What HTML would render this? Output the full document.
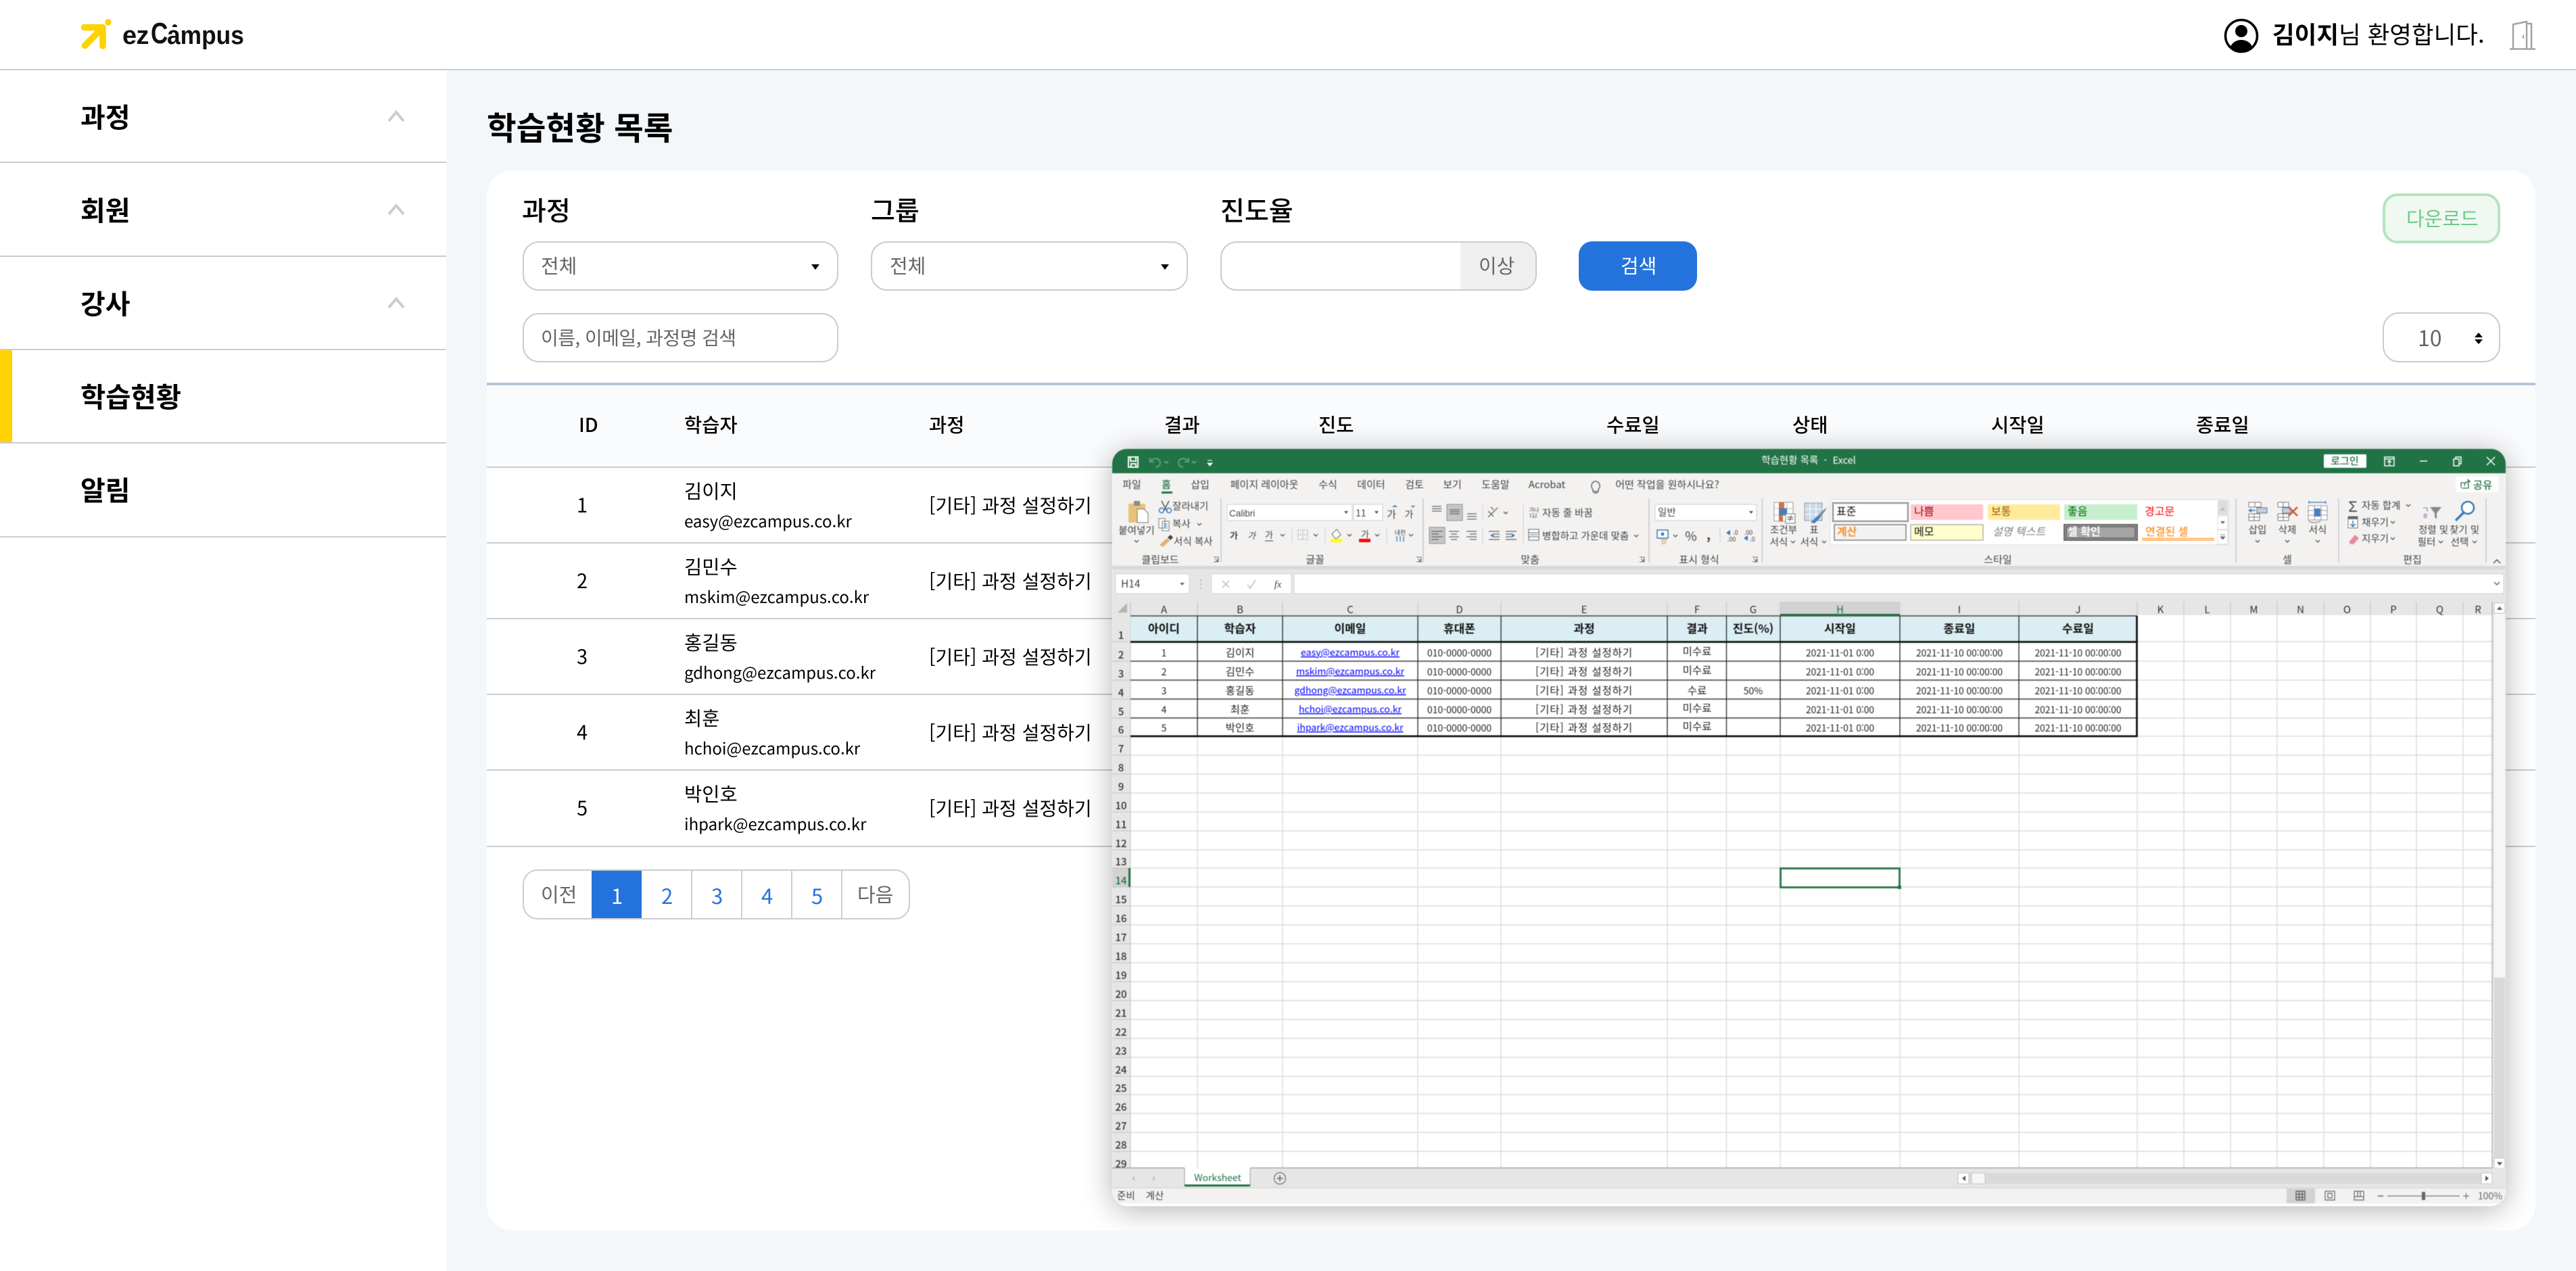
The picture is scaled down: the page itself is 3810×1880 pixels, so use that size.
<!DOCTYPE html>
<html lang="ko"><head><meta charset="utf-8"><title>학습현황 목록</title>
<style>
html,body{margin:0;padding:0;width:3810px;height:1880px;overflow:hidden;background:#f4f7fa;font-family:"Noto Sans CJK KR","Liberation Sans",sans-serif;color:#000}
.a{position:absolute;box-sizing:border-box}
.t{position:absolute;white-space:nowrap;line-height:1}
.b{font-weight:700}.m{font-weight:500}
.line{position:absolute;height:2px;background:#ccc}
.box{position:absolute;box-sizing:border-box;border:2px solid #ccc;border-radius:24px;background:#fff}
.g{color:#666}
.tri{position:absolute;width:0;height:0;border-left:6px solid transparent;border-right:6px solid transparent;border-top:8px solid #000}
.blue{color:#2473dd}
svg text{font-family:"Noto Sans CJK KR","Liberation Sans",sans-serif;font-size:15px;fill:#444}
.c{text-anchor:middle}
.hd{font-size:17px;font-weight:700;fill:#111;text-anchor:middle}
.d{font-size:15.5px;fill:#222;text-anchor:middle}
.e{font-size:15.5px;fill:#222;text-anchor:middle;letter-spacing:.9px}
.n{font-size:14px;fill:#222;text-anchor:middle}
.l{font-size:14px;fill:#00f;text-anchor:middle;text-decoration:underline}
.r{font-size:15px;font-weight:500;fill:#333;text-anchor:middle}
.col{font-size:15px;fill:#333;text-anchor:middle}
.s{font-size:15px;fill:#333}
.lg{position:absolute;white-space:nowrap;font:700 38px/44px "Liberation Sans",sans-serif;color:#111;transform-origin:0 0}
</style></head><body>
<!-- header -->
<div class="a" style="left:0;top:0;width:3810px;height:104px;background:#fff;border-bottom:2px solid #ccc"></div>
<svg class="a" style="left:115px;top:24px" width="60" height="54" viewBox="115 24 60 54">
<path d="M124.500 40.500H152V68M150 42.500L125.500 67.500" fill="none" stroke="#ffd200" stroke-width="9.500" stroke-linecap="round" stroke-linejoin="round"/>
<ellipse cx="160" cy="33" rx="4.500" ry="5" fill="#ffd200"/></svg>
<div class="lg" style="left:181px;top:31px;letter-spacing:-.6px">ez</div>
<div class="lg" style="left:223px;top:25px;font-size:44px;line-height:50px;transform:scaleX(.8)">C</div>
<div class="lg" style="left:247px;top:31px;transform:scaleX(.93)">ampus</div>
<div class="a" style="left:255px;top:36px;width:7px;height:4px;background:#111;border-radius:4px 4px 0 0"></div>
<svg class="a" style="left:3285px;top:24px" width="60" height="60" viewBox="3285 24 60 60">
<defs><clipPath id="uc"><circle cx="3315" cy="53" r="24"/></clipPath></defs>
<circle cx="3315" cy="53" r="23.500" fill="#fff" stroke="#000" stroke-width="3.500"/>
<circle cx="3315" cy="46" r="9" fill="#000"/>
<ellipse cx="3315" cy="74" rx="17" ry="15" fill="#000" clip-path="url(#uc)"/></svg>
<div class="t" style="left:3361px;top:32px;font-size:35.500px"><span class="b">김이지</span>님 환영합니다.</div>
<svg class="a" style="left:3708px;top:26px" width="46" height="52" viewBox="3708 26 46 52" fill="none" stroke="#a3a3a3" stroke-width="2.500">
<path d="M3712 72.500H3750M3717 72V36L3737 32V72M3738 35H3744V72"/><path d="M3732 52V57" stroke-width="2"/></svg>

<!-- sidebar -->
<div class="a" style="left:0;top:104px;width:660px;height:1776px;background:#fff"></div>
<div class="line" style="left:0;top:239px;width:660px"></div>
<div class="line" style="left:0;top:378px;width:660px"></div>
<div class="line" style="left:0;top:516px;width:660px"></div>
<div class="line" style="left:0;top:654px;width:660px"></div>
<div class="line" style="left:0;top:793px;width:660px"></div>
<div class="a" style="left:0;top:518px;width:18px;height:136px;background:#ffd200"></div>
<div class="t b" style="left:119px;top:151px;font-size:40px">과정</div>
<div class="t b" style="left:119px;top:289px;font-size:40px">회원</div>
<div class="t b" style="left:119px;top:427px;font-size:40px">강사</div>
<div class="t b" style="left:119px;top:565px;font-size:40.500px">학습현황</div>
<div class="t b" style="left:119px;top:703px;font-size:40px">알림</div>
<svg class="a" style="left:570px;top:160px" width="32" height="340" fill="none" stroke="#ccc" stroke-width="4"><path d="M5 19L16 6L27 19M5 157L16 144L27 157M5 295L16 282L27 295"/></svg>

<!-- title + card -->
<div class="t b" style="left:720px;top:163px;font-size:47.500px">학습현황 목록</div>
<div class="a" style="left:720px;top:252px;width:3030px;height:1568px;background:#fff;border-radius:38px"></div>
<div class="t m" style="left:772px;top:291px;font-size:39px">과정</div>
<div class="t m" style="left:1288px;top:291px;font-size:39px">그룹</div>
<div class="t m" style="left:1805px;top:291px;font-size:39px">진도율</div>
<div class="box" style="left:773px;top:357px;width:467px;height:73px"></div>
<div class="t g" style="left:800px;top:378px;font-size:29px">전체</div><div class="tri" style="left:1200px;top:391px"></div>
<div class="box" style="left:1288px;top:357px;width:469px;height:73px"></div>
<div class="t g" style="left:1316px;top:378px;font-size:29px">전체</div><div class="tri" style="left:1717px;top:391px"></div>
<div class="box" style="left:1805px;top:357px;width:468px;height:73px;overflow:hidden"><div class="a" style="left:353px;top:0;width:120px;height:70px;background:#efefef"></div></div>
<div class="t g" style="left:2187px;top:378px;font-size:29px">이상</div>
<div class="a" style="left:2335px;top:357px;width:175px;height:73px;background:#2473dd;border-radius:20px"></div>
<div class="t" style="left:2397px;top:378px;font-size:29px;color:#fff">검색</div>
<div class="a" style="left:3524px;top:286px;width:174px;height:74px;background:#eff8f1;border:4px solid #b3e5bf;border-radius:22px"></div>
<div class="t" style="left:3559px;top:308px;font-size:29px;color:#6ccb88">다운로드</div>
<div class="box" style="left:773px;top:463px;width:467px;height:73px"></div>
<div class="t g" style="left:800px;top:485px;font-size:28px;letter-spacing:-.55px">이름, 이메일, 과정명 검색</div>
<div class="box" style="left:3524px;top:462px;width:174px;height:74px"></div>
<div class="t g" style="left:3576px;top:483px;font-size:32px">10</div>
<div class="a" style="left:3660px;top:492px;width:0;height:0;border:6px solid transparent;border-top:0;border-bottom:7px solid #000"></div>
<div class="a" style="left:3660px;top:502px;width:0;height:0;border:6px solid transparent;border-bottom:0;border-top:7px solid #000"></div>

<!-- table -->
<div class="a" style="left:720px;top:566px;width:3030px;height:125px;background:#fafbfd;border-top:4px solid #b3c6de"></div>
<div class="line" style="left:720px;top:690px;width:3030px"></div>
<div class="line" style="left:720px;top:802px;width:3030px"></div>
<div class="line" style="left:720px;top:914px;width:3030px"></div>
<div class="line" style="left:720px;top:1026px;width:3030px"></div>
<div class="line" style="left:720px;top:1138px;width:3030px"></div>
<div class="line" style="left:720px;top:1251px;width:3030px"></div>
<div class="t m" style="left:856px;top:614px;font-size:28.500px">ID</div>
<div class="t m" style="left:1012px;top:614px;font-size:28.500px">학습자</div>
<div class="t m" style="left:1374px;top:614px;font-size:28.500px">과정</div>
<div class="t m" style="left:1722px;top:614px;font-size:28.500px">결과</div>
<div class="t m" style="left:1950px;top:614px;font-size:28.500px">진도</div>
<div class="t m" style="left:2376px;top:614px;font-size:28.500px">수료일</div>
<div class="t m" style="left:2651px;top:614px;font-size:28.500px">상태</div>
<div class="t m" style="left:2945px;top:614px;font-size:28.500px">시작일</div>
<div class="t m" style="left:3248px;top:614px;font-size:28.500px">종료일</div>

<div class="t" style="left:853px;top:732px;font-size:29px">1</div><div class="t" style="left:1012px;top:712px;font-size:28.500px">김이지</div><div class="t" style="left:1012px;top:758px;font-size:24px">easy@ezcampus.co.kr</div><div class="t" style="left:1374px;top:733px;font-size:28px">[기타] 과정 설정하기</div>
<div class="t" style="left:853px;top:844px;font-size:29px">2</div><div class="t" style="left:1012px;top:824px;font-size:28.500px">김민수</div><div class="t" style="left:1012px;top:870px;font-size:24px">mskim@ezcampus.co.kr</div><div class="t" style="left:1374px;top:845px;font-size:28px">[기타] 과정 설정하기</div>
<div class="t" style="left:853px;top:956px;font-size:29px">3</div><div class="t" style="left:1012px;top:936px;font-size:28.500px">홍길동</div><div class="t" style="left:1012px;top:982px;font-size:24px">gdhong@ezcampus.co.kr</div><div class="t" style="left:1374px;top:957px;font-size:28px">[기타] 과정 설정하기</div>
<div class="t" style="left:853px;top:1068px;font-size:29px">4</div><div class="t" style="left:1012px;top:1048px;font-size:28.500px">최훈</div><div class="t" style="left:1012px;top:1094px;font-size:24px">hchoi@ezcampus.co.kr</div><div class="t" style="left:1374px;top:1069px;font-size:28px">[기타] 과정 설정하기</div>
<div class="t" style="left:853px;top:1180px;font-size:29px">5</div><div class="t" style="left:1012px;top:1160px;font-size:28.500px">박인호</div><div class="t" style="left:1012px;top:1206px;font-size:24px">ihpark@ezcampus.co.kr</div><div class="t" style="left:1374px;top:1181px;font-size:28px">[기타] 과정 설정하기</div>

<!-- pagination -->
<div class="a" style="left:773px;top:1286px;width:573px;height:74px;border:2px solid #ccc;border-radius:22px;background:#fff"></div>
<div class="a" style="left:875px;top:1288px;width:74px;height:70px;background:#2473dd"></div>
<div class="a" style="left:1022px;top:1288px;width:2px;height:70px;background:#ccc"></div>
<div class="a" style="left:1096px;top:1288px;width:2px;height:70px;background:#ccc"></div>
<div class="a" style="left:1170px;top:1288px;width:2px;height:70px;background:#ccc"></div>
<div class="a" style="left:1244px;top:1288px;width:2px;height:70px;background:#ccc"></div>
<div class="t g" style="left:800px;top:1308px;font-size:29px">이전</div>
<div class="t" style="left:904px;top:1308px;font-size:31px;color:#fff">1</div>
<div class="t blue" style="left:978px;top:1308px;font-size:31px">2</div>
<div class="t blue" style="left:1052px;top:1308px;font-size:31px">3</div>
<div class="t blue" style="left:1126px;top:1308px;font-size:31px">4</div>
<div class="t blue" style="left:1200px;top:1308px;font-size:31px">5</div>
<div class="t g" style="left:1268px;top:1308px;font-size:29px">다음</div>

<!-- excel shadow -->
<div class="a" style="left:1585px;top:608px;width:2165px;height:1212px;border-radius:44px;overflow:hidden">
<div class="a" style="left:60px;top:56px;width:2061px;height:1120px;border-radius:24px;box-shadow:0 6px 44px rgba(0,0,0,.3)"></div></div>

<!-- excel window -->
<svg class="a" style="left:0;top:0;filter:blur(.45px)" width="3810" height="1880" viewBox="0 0 3810 1880">
<defs>
<clipPath id="w"><rect x="1645" y="664" width="2061" height="1120" rx="22"/></clipPath>
<clipPath id="sh"><rect x="1645" y="880" width="2042" height="848"/></clipPath>
</defs>
<g clip-path="url(#w)">
<rect x="1645" y="664" width="2061" height="1120" fill="#fff"/>
<rect x="1645" y="664" width="2061" height="36" fill="#217346"/>
<rect x="1645" y="700" width="2061" height="137" fill="#f3f2f1"/>
<rect x="1645" y="837" width="2061" height="53" fill="#e6e6e6"/>
<rect x="1645" y="837" width="2061" height="5" fill="#d8d8d8"/>
<!-- title bar -->
<path d="M1669 676H1683V691H1669ZM1672 676V682H1680V676M1673 691V686H1680V691" fill="none" stroke="#fff" stroke-width="2"/>
<path d="M1701 677V683H1707M1702 682C1708 675 1716 679 1716 684C1716 688 1713 691 1709 691M1758 677V683H1752M1757 682C1751 675 1743 679 1743 684C1743 688 1746 691 1750 691M1722 682L1725 685L1728 682M1763 682L1766 685L1769 682" fill="none" stroke="#5d9f7d" stroke-width="2"/>
<path d="M1786 681H1793M1786 685H1793L1789.500 689Z" fill="#fff" stroke="#fff" stroke-width="1"/>
<text x="2675" y="686" class="c" style="fill:#fff;font-size:14.500px" xml:space="preserve">학습현황 목록  -  Excel</text>
<rect x="3437" y="672" width="63" height="20" rx="1.500" fill="#fff"/>
<text x="3468" y="687" class="c" style="fill:#217346;font-size:15px;font-weight:500">로그인</text>
<path d="M3527 676H3541V689H3527ZM3527 679H3541M3534 688V682M3531 684L3534 681L3537 684" fill="none" stroke="#fff" stroke-width="1.500"/>
<path d="M3579 682H3590" stroke="#fff" stroke-width="1.500"/>
<path d="M3629 679H3637V689H3629ZM3632 679V676H3640V686H3637" fill="none" stroke="#fff" stroke-width="1.500"/>
<path d="M3678 676L3690 688M3690 676L3678 688" stroke="#fff" stroke-width="1.500"/>
<!-- tabs -->
<g style="font-size:15px">
<text x="1674" y="722" class="c">파일</text><text x="1725" y="722" class="c" style="fill:#217346;font-weight:500">홈</text>
<text x="1775" y="722" class="c">삽입</text><text x="1870" y="722" class="c">페이지 레이아웃</text>
<text x="1964" y="722" class="c">수식</text><text x="2028" y="722" class="c">데이터</text>
<text x="2092" y="722" class="c">검토</text><text x="2148" y="722" class="c">보기</text>
<text x="2212" y="722" class="c">도움말</text><text x="2288" y="722" class="c">Acrobat</text>
<text x="2466" y="722" class="c">어떤 작업을 원하시나요?</text></g>
<rect x="1718" y="727" width="16" height="3" fill="#217346"/>
<path d="M2356 724C2352 720 2354 712 2360 712C2366 712 2368 720 2364 724V727H2356ZM2357 729H2363" fill="none" stroke="#666" stroke-width="1.500"/>
<rect x="3632" y="705" width="63" height="23" fill="#fff"/>
<path d="M3641 722H3651V716M3640 721V714L3647 714M3645 719C3645 714 3648 712 3652 712M3649 709L3653 712L3649 716" fill="none" stroke="#217346" stroke-width="1.300"/>
<text x="3672" y="723" class="c" style="fill:#217346;font-weight:500;font-size:15.500px">공유</text>
<!-- group separators -->
<path d="M1806 737V832M2105 737V832M2439 737V832M2606.500 737V832M3307 737V832M3459 737V832M3677 737V832" stroke="#c9c9c9" stroke-width="1.500"/>
<g style="font-size:14.500px">
<text x="1716" y="833" class="c">클립보드</text><text x="1945" y="833" class="c">글꼴</text><text x="2263" y="833" class="c">맞춤</text>
<text x="2513" y="833" class="c">표시 형식</text><text x="2955" y="833" class="c">스타일</text><text x="3383" y="833" class="c">셀</text><text x="3568" y="833" class="c">편집</text></g>
<path d="M1795 824H1802V831H1795M1797 826L1801 830M1801 827V830H1798M2095 824H2102V831H2095M2097 826L2101 830M2101 827V830H2098M2425 824H2432V831H2425M2427 826L2431 830M2431 827V830H2428M2592 824H2599V831H2592M2594 826L2598 830M2598 827V830H2595" fill="none" stroke="#777" stroke-width="1"/>
<path d="M3688 833L3693 828L3698 833" fill="none" stroke="#555" stroke-width="1.500"/>
<!-- clipboard -->
<rect x="1669" y="745" width="25" height="28" rx="1" fill="#e9c27a"/><rect x="1677" y="741" width="9" height="7" fill="#8a8a8a"/>
<path d="M1682 753H1692L1698 759V773H1682Z" fill="#fff" stroke="#777" stroke-width="1"/>
<text x="1681" y="790" class="c" style="font-size:14.500px">붙여넣기</text>
<path d="M1678 799L1681 802L1684 799" fill="none" stroke="#555" stroke-width="1.300"/>
<path d="M1718 741L1727 758M1729 741L1720 758" stroke="#555" stroke-width="1.500"/><circle cx="1718" cy="755" r="3.500" fill="none" stroke="#3b79b8" stroke-width="1.500"/><circle cx="1729" cy="755" r="3.500" fill="none" stroke="#3b79b8" stroke-width="1.500"/>
<text x="1734" y="754" style="font-size:14.500px">잘라내기</text>
<path d="M1714 767H1723V781H1714ZM1719 771H1729V785H1719Z" fill="#fff" stroke="#777" stroke-width="1"/><path d="M1721 775H1727M1721 778H1727M1721 781H1727" stroke="#3b79b8"/>
<text x="1734" y="780" style="font-size:14.500px">복사</text><path d="M1771 774L1774 777L1777 774" fill="none" stroke="#555" stroke-width="1.300"/>
<path d="M1715 806L1726 796L1730 800L1720 809Z" fill="#e0b070"/><path d="M1727 795L1731 791L1735 795L1731 799Z" fill="#444"/>
<text x="1736" y="806" style="font-size:14.500px">서식 복사</text>
<!-- font -->
<rect x="1815" y="746" width="185" height="24" fill="#fff" stroke="#d0d0d0"/><text x="1818" y="764" style="font-family:'Liberation Sans',sans-serif;font-size:13.500px">Calibri</text><path d="M1988 756H1994L1991 760Z" fill="#555"/>
<rect x="2002" y="746" width="43" height="24" fill="#fff" stroke="#d0d0d0"/><text x="2005" y="764" style="font-size:14px">11</text><path d="M2033 756H2039L2036 760Z" fill="#555"/>
<text x="2058" y="766" class="c" style="font-size:15px">가</text><path d="M2060 750L2064 747L2064 747L2068 750Z" fill="#3b79b8" transform="translate(-1,0)"/>
<text x="2084" y="766" class="c" style="font-size:14px">가</text><path d="M2087 748H2093L2090 751Z" fill="#3b79b8"/>
<text x="1825" y="797" class="c" style="font-weight:700;font-size:13px">가</text><text x="1851" y="797" class="c" style="font-style:italic;font-size:13px">가</text><text x="1877" y="796" class="c" style="font-size:13px">가</text><path d="M1871 800H1883" stroke="#444"/>
<path d="M1894 790L1897 793L1900 790M1943 790L1946 793L1949 790M1993 790L1996 793L1999 790M2034 790L2037 793L2040 790M2084 790L2087 793L2090 790" fill="none" stroke="#555" stroke-width="1.300"/>
<path d="M1911 781V803M1960 781V803M2051 781V803M2193 746V770M2193 780V804M2253 746V804M2544 781V803" stroke="#d0d0d0"/>
<path d="M1920 784H1934V798H1920ZM1927 784V798M1920 791H1934" fill="none" stroke="#999" stroke-dasharray="1.500 1.500"/>
<path d="M1974 795L1970 790L1977 783L1983 791L1976 797Z" fill="#fff" stroke="#666"/><rect x="1968" y="797" width="17" height="5" fill="#ffff00"/>
<text x="2019" y="795" class="c" style="font-size:13px">가</text><rect x="2010" y="797" width="17" height="5" fill="#f00"/>
<text x="2071" y="791" class="c" style="font-size:9px">내천</text><path d="M2066 793V801M2071 793V801M2076 793V801" stroke="#3b79b8" stroke-width="1.300"/>
<!-- align -->
<rect x="2140" y="746" width="23" height="24" fill="#c6c6c6" stroke="#8f8f8f"/><rect x="2114" y="780" width="23" height="24" fill="#c6c6c6" stroke="#8f8f8f"/>
<path d="M2118 749H2132M2118 752.500H2132M2118 756H2132M2144 754H2159M2144 757H2159M2144 760H2159M2170 760H2184M2170 764H2184M2170 768H2184M2117 786H2134M2117 790H2128M2117 794H2134M2117 798H2128M2143 786H2158M2146 790H2155M2143 794H2158M2146 798H2155M2169 786H2184M2174 790H2184M2169 794H2184M2174 798H2184M2202 786H2218M2208 790H2218M2208 794H2218M2202 798H2218M2227 786H2243M2227 790H2237M2227 794H2237M2227 798H2243" stroke="#666" stroke-width="1.200" fill="none"/>
<path d="M2201 765L2215 751M2205 750L2209 754M2201 756L2209 764" stroke="#666" stroke-width="1.300"/>
<path d="M2224 757L2227 760L2230 757" fill="none" stroke="#555" stroke-width="1.300"/>
<path d="M2204 792L2209 789V795ZM2241 792L2236 789V795Z" fill="#3b79b8"/>
<text x="2269" y="757" class="c" style="font-size:8px">가나</text><text x="2266" y="766" class="c" style="font-size:8px">다</text><path d="M2272 759V765H2269" stroke="#3b79b8" fill="none"/>
<text x="2281" y="764" style="font-size:14.500px">자동 줄 바꿈</text>
<path d="M2261 783H2276V799H2261ZM2261 788H2276M2261 794H2276" fill="#fff" stroke="#666"/><path d="M2263 791H2274" stroke="#3b79b8"/>
<text x="2281" y="798" style="font-size:14.500px">병합하고 가운데 맞춤</text><path d="M2417 791L2420 794L2423 791" fill="none" stroke="#555" stroke-width="1.300"/>
<!-- number -->
<rect x="2448" y="746" width="150" height="24" fill="#fff" stroke="#d0d0d0"/><text x="2452" y="763" style="font-size:14.500px">일반</text><path d="M2587 756H2593L2590 760Z" fill="#555"/>
<rect x="2451" y="784" width="16" height="12" fill="#fff" stroke="#3b79b8" stroke-width="1.500"/><circle cx="2459" cy="790" r="2.500" fill="#3b79b8"/><path d="M2456 798H2466M2457 801H2465M2457 804H2464" stroke="#e9c27a" stroke-width="2"/>
<path d="M2475 791L2478 794L2481 791" fill="none" stroke="#555" stroke-width="1.300"/>
<text x="2501" y="800" class="c" style="font-size:19px;fill:#444">%</text><text x="2527" y="798" class="c" style="font-size:19px;font-weight:700;fill:#444">,</text>
<path d="M2553 788L2559 784V792Z" fill="#3b79b8"/><text x="2567" y="791" class="c" style="font-size:9px">.0</text><text x="2561" y="801" class="c" style="font-size:9px">.00</text>
<text x="2586" y="791" class="c" style="font-size:9px">.00</text><path d="M2585 796L2579 792V800Z" fill="#3b79b8" transform="rotate(180 2582 796)"/><text x="2592" y="801" class="c" style="font-size:9px">.0</text>
<!-- styles -->
<rect x="2624" y="743" width="28" height="28" fill="#fff" stroke="#999"/><path d="M2633 743V771M2643 743V771M2624 752H2652M2624 762H2652" stroke="#bbb"/><rect x="2631" y="743" width="8" height="9" fill="#d86b45"/><rect x="2631" y="752" width="12" height="10" fill="#4a7ebb"/><rect x="2631" y="762" width="6" height="9" fill="#d86b45"/>
<rect x="2641" y="760" width="14" height="14" fill="#fff" stroke="#777"/><text x="2648" y="771" class="c" style="font-size:12px;fill:#333">≠</text>
<text x="2638" y="789" class="c" style="font-size:14.500px">조건부</text><text x="2631" y="807" class="c" style="font-size:14.500px">서식</text><path d="M2649 800L2652 803L2655 800" fill="none" stroke="#555" stroke-width="1.300"/>
<rect x="2669" y="744" width="26" height="26" fill="#c8d8ea" stroke="#999"/><path d="M2677 744V770M2686 744V770M2669 753H2695M2669 761H2695" stroke="#fff"/><path d="M2702 752L2690 768L2684 774L2678 773L2686 765Z" fill="#4a7ebb"/><path d="M2702 750L2693 764L2690 761Z" fill="#888"/>
<text x="2683" y="789" class="c" style="font-size:14.500px">표</text><text x="2676" y="807" class="c" style="font-size:14.500px">서식</text><path d="M2695 800L2698 803L2701 800" fill="none" stroke="#555" stroke-width="1.300"/>
<rect x="2707" y="739" width="589" height="67" fill="#fff" stroke="#dcdcdc"/>
<rect x="2711" y="744" width="111" height="27" fill="#fff" stroke="#9a9a9a" stroke-width="2.500"/><text x="2716" y="762" style="font-size:16px;fill:#111">표준</text>
<rect x="2826" y="746" width="107" height="23" fill="#ffc7ce"/><text x="2831" y="762" style="font-size:16px;fill:#9c0006">나쁨</text>
<rect x="2940" y="746" width="107" height="23" fill="#ffeb9c"/><text x="2945" y="762" style="font-size:16px;fill:#9c5700">보통</text>
<rect x="3053" y="746" width="108" height="23" fill="#c6efce"/><text x="3058" y="762" style="font-size:16px;fill:#006100">좋음</text>
<text x="3172" y="762" style="font-size:16px;fill:#f00">경고문</text>
<rect x="2713" y="776" width="106" height="23" fill="#f2f2f2" stroke="#7f7f7f" stroke-width="1.500"/><text x="2717" y="792" style="font-size:16px;fill:#fa7d00;font-weight:500">계산</text>
<rect x="2826" y="776" width="107" height="23" fill="#ffc" stroke="#b2b2b2" stroke-width="1.500"/><text x="2831" y="792" style="font-size:16px;fill:#111">메모</text>
<text x="2947" y="792" style="font-size:16px;fill:#7f7f7f;font-style:italic">설명 텍스트</text>
<rect x="3053" y="776" width="108" height="23" fill="#a5a5a5" stroke="#3f3f3f" stroke-width="1.500"/><rect x="3056" y="779" width="102" height="17" fill="none" stroke="#3f3f3f"/><text x="3058" y="792" style="font-size:16px;fill:#fff;font-weight:700">셀 확인</text>
<text x="3173" y="792" style="font-size:16px;fill:#fa7d00">연결된 셀</text><path d="M3168 796.500H3275M3168 799H3275" stroke="#ff8f1f" stroke-width="1.200"/>
<rect x="3280" y="740" width="15" height="22" fill="#ddd"/><path d="M3284 755L3287.500 750L3291 755Z" fill="#bbb"/>
<rect x="3280" y="763" width="15" height="20" fill="#fff" stroke="#ddd"/><path d="M3284 771H3291L3287.500 775Z" fill="#666"/>
<rect x="3280" y="784" width="15" height="21" fill="#fff" stroke="#ddd"/><path d="M3284 791H3291M3284 794H3291L3287.500 798Z" fill="#666" stroke="#666" stroke-width=".7"/>
<!-- cells -->
<path d="M3326 743H3344V750H3326ZM3335 743V750M3326 760H3342V770H3326ZM3326 765H3342M3334 760V770" fill="#fff" stroke="#777"/><rect x="3338" y="751" width="15" height="8" fill="#bcd0e6" stroke="#777"/><path d="M3327 755H3336" stroke="#3b79b8" stroke-width="1.500"/><path d="M3325 755L3330 752V758Z" fill="#3b79b8"/>
<path d="M3369 743H3385V750H3369ZM3369 760H3385V770H3369ZM3369 765H3385M3377 760V770M3377 743V750" fill="#fff" stroke="#777"/><rect x="3376" y="751" width="12" height="8" fill="#bcd0e6" stroke="#777"/><path d="M3385 750L3398 763M3398 750L3385 763" stroke="#d8523a" stroke-width="2.500"/>
<path d="M3414 748H3442V769H3414ZM3423 748V769M3433 748V769M3414 755H3442M3414 762H3442" fill="#fff" stroke="#999"/><rect x="3423" y="752" width="9" height="12" fill="#4a7ebb"/><path d="M3415 743H3440M3415 741V745M3440 741V745" stroke="#3b79b8" stroke-width="1.300"/><path d="M3415 770C3415 774 3430 774 3432 770" fill="none" stroke="#777"/>
<text x="3339" y="789" class="c" style="font-size:14.500px">삽입</text><text x="3383" y="789" class="c" style="font-size:14.500px">삭제</text><text x="3428" y="789" class="c" style="font-size:14.500px">서식</text>
<path d="M3336 799L3339 802L3342 799M3380 799L3383 802L3386 799M3425 799L3428 802L3431 799M3559 746L3562 749L3565 746M3536 771L3539 774L3542 771M3536 795L3539 798L3542 795M3607 800L3610 803L3613 800M3657 800L3660 803L3663 800" fill="none" stroke="#555" stroke-width="1.300"/>
<text x="3480" y="757" class="c" style="font-size:22px;fill:#444;font-family:'Liberation Sans',sans-serif">Σ</text><text x="3493" y="753" style="font-size:14.500px">자동 합계</text>
<rect x="3473" y="764" width="14" height="17" fill="#fff" stroke="#777"/><rect x="3473" y="764" width="14" height="4" fill="#666"/><path d="M3480 770V778M3476 775L3480 779L3484 775" fill="none" stroke="#3b79b8" stroke-width="1.500"/><text x="3493" y="778" style="font-size:14.500px">채우기</text>
<path d="M3474 802L3483 791L3489 796L3481 805H3477Z" fill="#e88b9d"/><text x="3493" y="802" style="font-size:14.500px">지우기</text>
<text x="3587" y="758" class="c" style="font-size:12px;fill:#3b79b8">ㄱ</text><text x="3587" y="767" class="c" style="font-size:11px;fill:#8a5fb5">ㅎ</text><path d="M3594 750H3611L3604 759V768L3601 765V759Z" fill="#888"/>
<circle cx="3650" cy="751" r="9" fill="#fff" stroke="#3b79b8" stroke-width="2.500"/><path d="M3644 758L3632 770" stroke="#3b79b8" stroke-width="3.500"/>
<text x="3599" y="789" class="c" style="font-size:14.500px">정렬 및</text><text x="3589" y="807" class="c" style="font-size:14.500px">필터</text><text x="3645" y="789" class="c" style="font-size:14.500px">찾기 및</text><text x="3638" y="807" class="c" style="font-size:14.500px">선택</text>
<!-- formula bar -->
<rect x="1650" y="849" width="109" height="29" fill="#fff" stroke="#d4d4d4"/><text x="1658" y="869" style="font-size:15.500px">H14</text><path d="M1745 862H1752L1748.500 866Z" fill="#666"/>
<path d="M1776 857V859M1776 863V865M1776 869V871" stroke="#aaa" stroke-width="1.500"/>
<rect x="1792" y="849" width="118" height="29" fill="#fff" stroke="#d4d4d4"/><path d="M1808 859L1818 869M1818 859L1808 869M1845 865L1849 870L1857 858" fill="none" stroke="#bbb" stroke-width="1.500"/><text x="1890" y="869" class="c" style="font-family:'Liberation Serif',serif;font-style:italic;font-size:15px">fx</text>
<rect x="1914" y="849" width="1789" height="29" fill="#fff" stroke="#d4d4d4"/><path d="M3689 861L3693 865L3697 861" fill="none" stroke="#666" stroke-width="1.500"/>
<!-- sheet -->
<rect x="1645" y="890" width="2061" height="20" fill="#e6e6e6"/>
<path d="M1667 892V906H1653Z" fill="#b5b5b5"/>
<rect x="1645" y="910" width="27" height="818" fill="#e6e6e6"/>
<rect x="1672" y="910" width="2014" height="818" fill="#fff"/>
<rect x="2633" y="890" width="177" height="20" fill="#d2d2d2"/>
<rect x="1645" y="1284" width="27" height="28" fill="#d2d2d2"/>
<g clip-path="url(#sh)">
<!-- grid -->
<path d="M1672 1117H3686M1672 1145H3686M1672 1173H3686M1672 1201H3686M1672 1229H3686M1672 1257H3686M1672 1284H3686M1672 1312H3686M1672 1340H3686M1672 1368H3686M1672 1396H3686M1672 1424H3686M1672 1452H3686M1672 1480H3686M1672 1508H3686M1672 1536H3686M1672 1564H3686M1672 1592H3686M1672 1619H3686M1672 1647H3686M1672 1675H3686M1672 1703H3686M3161 949H3686M3161 978H3686M3161 1006H3686M3161 1034H3686M3161 1062H3686M3161 1089H3686M1771 1089V1728M1897 1089V1728M2097 1089V1728M2220 1089V1728M2466 1089V1728M2553.500 1089V1728M2633 1089V1728M2810 1089V1728M2986 1089V1728M3161 1089V1728M3230 911V1728M3299 911V1728M3368 911V1728M3437 911V1728M3506 911V1728M3574 911V1728M3643 911V1728" stroke="#dcdcdc" stroke-width="1.500" fill="none"/>
<!-- col header separators -->
<path d="M1672 890V910M1771 890V910M1897 890V910M2097 890V910M2220 890V910M2466 890V910M2553.500 890V910M2633 890V910M2810 890V910M2986 890V910M3161 890V910M3230 890V910M3299 890V910M3368 890V910M3437 890V910M3506 890V910M3574 890V910M3643 890V910" stroke="#c8c8c8" stroke-width="1.200"/>
<path d="M1645 949H1672M1645 978H1672M1645 1006H1672M1645 1034H1672M1645 1062H1672M1645 1089H1672M1645 1117H1672M1645 1145H1672M1645 1173H1672M1645 1201H1672M1645 1229H1672M1645 1257H1672M1645 1284H1672M1645 1312H1672M1645 1340H1672M1645 1368H1672M1645 1396H1672M1645 1424H1672M1645 1452H1672M1645 1480H1672M1645 1508H1672M1645 1536H1672M1645 1564H1672M1645 1592H1672M1645 1619H1672M1645 1647H1672M1645 1675H1672M1645 1703H1672M1672 890V1728" stroke="#c8c8c8" stroke-width="1.200" fill="none"/>
<!-- table -->
<rect x="1672" y="911" width="1489" height="38" fill="#daeef3"/>
<path d="M1672 911H3161M1672 978H3161M1672 1006H3161M1672 1034H3161M1672 1062H3161" stroke="#555" stroke-width="1.800"/>
<path d="M1771 911V1089M1897 911V1089M2097 911V1089M2220 911V1089M2466 911V1089M2553.500 911V1089M2633 911V1089M2810 911V1089M2986 911V1089" stroke="#222" stroke-width="1.300"/>
<path d="M1672 949.500H3161M1672 1089H3161M3160.500 911V1090" stroke="#111" stroke-width="2.800"/>
<rect x="2633" y="908" width="177" height="3" fill="#217346"/>
<!-- col letters -->
<text x="1721.500" y="907" class="col">A</text><text x="1834" y="907" class="col">B</text><text x="1997" y="907" class="col">C</text><text x="2158.500" y="907" class="col">D</text><text x="2343" y="907" class="col">E</text><text x="2510" y="907" class="col">F</text><text x="2593" y="907" class="col">G</text><text x="2721.500" y="907" class="col" style="fill:#217346">H</text><text x="2898" y="907" class="col">I</text><text x="3073.500" y="907" class="col">J</text><text x="3195.500" y="907" class="col">K</text><text x="3264.500" y="907" class="col">L</text><text x="3333.500" y="907" class="col">M</text><text x="3402.500" y="907" class="col">N</text><text x="3471.500" y="907" class="col">O</text><text x="3540" y="907" class="col">P</text><text x="3608.500" y="907" class="col">Q</text><text x="3665" y="907" class="col">R</text>
<!-- row numbers -->
<g><text x="1658" y="945" class="r">1</text><text x="1658" y="974" class="r">2</text><text x="1658" y="1002" class="r">3</text><text x="1658" y="1030" class="r">4</text><text x="1658" y="1058" class="r">5</text><text x="1658" y="1085" class="r">6</text><text x="1658" y="1113" class="r">7</text><text x="1658" y="1141" class="r">8</text><text x="1658" y="1169" class="r">9</text><text x="1658" y="1197" class="r">10</text><text x="1658" y="1225" class="r">11</text><text x="1658" y="1253" class="r">12</text><text x="1658" y="1280" class="r">13</text><text x="1658" y="1308" class="r" style="fill:#217346">14</text><text x="1658" y="1336" class="r">15</text><text x="1658" y="1364" class="r">16</text><text x="1658" y="1392" class="r">17</text><text x="1658" y="1420" class="r">18</text><text x="1658" y="1448" class="r">19</text><text x="1658" y="1476" class="r">20</text><text x="1658" y="1504" class="r">21</text><text x="1658" y="1532" class="r">22</text><text x="1658" y="1560" class="r">23</text><text x="1658" y="1588" class="r">24</text><text x="1658" y="1615" class="r">25</text><text x="1658" y="1643" class="r">26</text><text x="1658" y="1671" class="r">27</text><text x="1658" y="1699" class="r">28</text><text x="1658" y="1727" class="r">29</text></g>
<!-- heads -->
<text x="1721.500" y="936" class="hd">아이디</text><text x="1834" y="936" class="hd">학습자</text><text x="1997" y="936" class="hd">이메일</text><text x="2158.500" y="936" class="hd">휴대폰</text><text x="2343" y="936" class="hd">과정</text><text x="2510" y="936" class="hd">결과</text><text x="2593" y="936" class="hd">진도(%)</text><text x="2721.500" y="936" class="hd">시작일</text><text x="2898" y="936" class="hd">종료일</text><text x="3073.500" y="936" class="hd">수료일</text>
<!-- rows -->
<text x="1721.500" y="971" class="n">1</text><text x="1834" y="971" class="d">김이지</text><text x="1997" y="970" class="l" textLength="146" lengthAdjust="spacingAndGlyphs">easy@ezcampus.co.kr</text><text x="2158.500" y="971" class="n">010-0000-0000</text><text x="2343" y="971" class="e">[기타] 과정 설정하기</text><text x="2510" y="969" class="d">미수료</text><text x="2721.500" y="971" class="n" textLength="101" lengthAdjust="spacingAndGlyphs">2021-11-01 0:00</text><text x="2898" y="971" class="n" textLength="128" lengthAdjust="spacingAndGlyphs">2021-11-10 00:00:00</text><text x="3073.500" y="971" class="n" textLength="128" lengthAdjust="spacingAndGlyphs">2021-11-10 00:00:00</text>
<text x="1721.500" y="999" class="n">2</text><text x="1834" y="999" class="d">김민수</text><text x="1997" y="998" class="l" textLength="160" lengthAdjust="spacingAndGlyphs">mskim@ezcampus.co.kr</text><text x="2158.500" y="999" class="n">010-0000-0000</text><text x="2343" y="999" class="e">[기타] 과정 설정하기</text><text x="2510" y="997" class="d">미수료</text><text x="2721.500" y="999" class="n" textLength="101" lengthAdjust="spacingAndGlyphs">2021-11-01 0:00</text><text x="2898" y="999" class="n" textLength="128" lengthAdjust="spacingAndGlyphs">2021-11-10 00:00:00</text><text x="3073.500" y="999" class="n" textLength="128" lengthAdjust="spacingAndGlyphs">2021-11-10 00:00:00</text>
<text x="1721.500" y="1027" class="n">3</text><text x="1834" y="1027" class="d">홍길동</text><text x="1997" y="1026" class="l" textLength="165" lengthAdjust="spacingAndGlyphs">gdhong@ezcampus.co.kr</text><text x="2158.500" y="1027" class="n">010-0000-0000</text><text x="2343" y="1027" class="e">[기타] 과정 설정하기</text><text x="2510" y="1027" class="d">수료</text><text x="2593" y="1027" class="n">50%</text><text x="2721.500" y="1027" class="n" textLength="101" lengthAdjust="spacingAndGlyphs">2021-11-01 0:00</text><text x="2898" y="1027" class="n" textLength="128" lengthAdjust="spacingAndGlyphs">2021-11-10 00:00:00</text><text x="3073.500" y="1027" class="n" textLength="128" lengthAdjust="spacingAndGlyphs">2021-11-10 00:00:00</text>
<text x="1721.500" y="1055" class="n">4</text><text x="1834" y="1055" class="d">최훈</text><text x="1997" y="1054" class="l" textLength="152" lengthAdjust="spacingAndGlyphs">hchoi@ezcampus.co.kr</text><text x="2158.500" y="1055" class="n">010-0000-0000</text><text x="2343" y="1055" class="e">[기타] 과정 설정하기</text><text x="2510" y="1053" class="d">미수료</text><text x="2721.500" y="1055" class="n" textLength="101" lengthAdjust="spacingAndGlyphs">2021-11-01 0:00</text><text x="2898" y="1055" class="n" textLength="128" lengthAdjust="spacingAndGlyphs">2021-11-10 00:00:00</text><text x="3073.500" y="1055" class="n" textLength="128" lengthAdjust="spacingAndGlyphs">2021-11-10 00:00:00</text>
<text x="1721.500" y="1082" class="n">5</text><text x="1834" y="1082" class="d">박인호</text><text x="1997" y="1081" class="l" textLength="157" lengthAdjust="spacingAndGlyphs">ihpark@ezcampus.co.kr</text><text x="2158.500" y="1082" class="n">010-0000-0000</text><text x="2343" y="1082" class="e">[기타] 과정 설정하기</text><text x="2510" y="1080" class="d">미수료</text><text x="2721.500" y="1082" class="n" textLength="101" lengthAdjust="spacingAndGlyphs">2021-11-01 0:00</text><text x="2898" y="1082" class="n" textLength="128" lengthAdjust="spacingAndGlyphs">2021-11-10 00:00:00</text><text x="3073.500" y="1082" class="n" textLength="128" lengthAdjust="spacingAndGlyphs">2021-11-10 00:00:00</text>
<!-- selection -->
<rect x="2633.500" y="1284.500" width="176" height="28" fill="none" stroke="#217346" stroke-width="2.800"/><rect x="2807" y="1310" width="5" height="5" fill="#217346"/>
<rect x="1669" y="1284" width="3" height="28" fill="#217346"/>
</g>
<!-- right scrollbar -->
<rect x="3686" y="880" width="20" height="848" fill="#e6e6e6"/>
<path d="M3686 890V1728" stroke="#aaa" stroke-width="1.200"/>
<rect x="3689" y="908" width="16" height="538" fill="#f6f6f6"/><rect x="3689" y="1446" width="16" height="267" fill="#d9d9d9"/>
<rect x="3689" y="892" width="16" height="15" fill="#fff" stroke="#c4c4c4"/><path d="M3693 902L3697 897L3701 902Z" fill="#555"/>
<rect x="3689" y="1713" width="16" height="15" fill="#fff" stroke="#c4c4c4"/><path d="M3693 1719H3701L3697 1724Z" fill="#555"/>
<!-- bottom -->
<rect x="1645" y="1728" width="2061" height="29" fill="#e6e6e6"/>
<path d="M1645 1727.500H1752M1849 1727.500H3686" stroke="#aaa" stroke-width="1.500"/>
<rect x="1752" y="1728" width="97" height="26" fill="#fff"/><path d="M1752 1728V1754M1849 1728V1754" stroke="#aaa" stroke-width="1.200"/><rect x="1752" y="1752" width="97" height="3" fill="#217346"/>
<text x="1801" y="1747" class="c" style="fill:#217346;font-size:14px">Worksheet</text>
<path d="M1678 1739L1674 1743L1678 1747ZM1705 1739L1709 1743L1705 1747Z" fill="#c4c4c4"/>
<circle cx="1893" cy="1743" r="8.500" fill="none" stroke="#777" stroke-width="1.300"/><path d="M1888.500 1743H1897.500M1893 1738.500V1747.500" stroke="#666" stroke-width="1.500"/>
<rect x="2912" y="1735" width="758" height="16" fill="#d9d9d9"/>
<rect x="2896" y="1735" width="16" height="16" fill="#fff" stroke="#c4c4c4"/><path d="M2907 1739L2902 1743L2907 1747Z" fill="#555"/>
<rect x="2916" y="1735" width="20" height="16" fill="#f7f7f7" stroke="#c4c4c4"/>
<rect x="3670" y="1735" width="16" height="16" fill="#fff" stroke="#c4c4c4"/><path d="M3676 1739L3681 1743L3676 1747Z" fill="#555"/>
<rect x="1645" y="1757" width="2061" height="23" fill="#f3f2f1"/><path d="M1645 1757H3706" stroke="#d8d8d8" stroke-width="1.500"/>
<text x="1665.500" y="1774" class="c" style="font-size:14.500px">준비</text><text x="1708" y="1774" class="c" style="font-size:14.500px">계산</text>
<rect x="3382" y="1758" width="42" height="22" fill="#d2d2d2"/>
<path d="M3396 1762H3409V1775H3396ZM3400.500 1762V1775M3405 1762V1775M3396 1766.500H3409M3396 1771H3409" fill="none" stroke="#555" stroke-width="1.200"/>
<path d="M3439 1762H3453V1775H3439ZM3443 1765H3449V1772H3443Z" fill="none" stroke="#666" stroke-width="1.200"/>
<path d="M3482 1762H3496V1775H3482ZM3482 1770H3496M3487 1762V1770M3491 1762V1770" fill="none" stroke="#666" stroke-width="1.200"/>
<path d="M3517 1769H3525" stroke="#666" stroke-width="1.500"/><path d="M3531 1769H3638" stroke="#777" stroke-width="1.200"/><rect x="3582" y="1763" width="5" height="12" fill="#666"/><path d="M3643 1769H3652M3647.500 1764.500V1773.500" stroke="#777" stroke-width="1.200"/>
<text x="3683" y="1774" class="c" style="font-size:14px;fill:#666">100%</text>
</g>
</svg>
</body></html>
